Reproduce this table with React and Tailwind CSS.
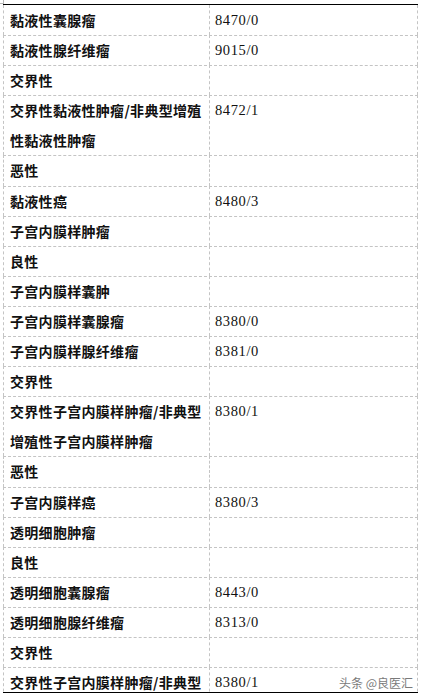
import React from "react";

const rows = [
  [["黏液性囊腺瘤"], "8470/0"],
  [["黏液性腺纤维瘤"], "9015/0"],
  [["交界性"], ""],
  [["交界性黏液性肿瘤/非典型增殖", "性黏液性肿瘤"], "8472/1"],
  [["恶性"], ""],
  [["黏液性癌"], "8480/3"],
  [["子宫内膜样肿瘤"], ""],
  [["良性"], ""],
  [["子宫内膜样囊肿"], ""],
  [["子宫内膜样囊腺瘤"], "8380/0"],
  [["子宫内膜样腺纤维瘤"], "8381/0"],
  [["交界性"], ""],
  [["交界性子宫内膜样肿瘤/非典型", "增殖性子宫内膜样肿瘤"], "8380/1"],
  [["恶性"], ""],
  [["子宫内膜样癌"], "8380/3"],
  [["透明细胞肿瘤"], ""],
  [["良性"], ""],
  [["透明细胞囊腺瘤"], "8443/0"],
  [["透明细胞腺纤维瘤"], "8313/0"],
  [["交界性"], ""],
  [["交界性子宫内膜样肿瘤/非典型"], "8380/1"],
];

export default function App() {
  return (
    <div className="relative h-[699px] w-[422px] overflow-hidden bg-white text-[#111111]">
      <div className="absolute left-[3px] top-0 h-[4px] w-px bg-[#b8b8b8]" />
      <div className="absolute left-0 top-[3px] h-px w-[3px] bg-[#b8b8b8]" />
      <div className="ml-[3px] mt-[4px] h-[689px] w-[415px] overflow-hidden border-t border-b border-black">
        {rows.map(([left, right], i) => (
          <div
            key={i}
            className="-mb-px flex border-b border-dashed border-[#c4c4c4] leading-[30.1px]"
          >
            <div
              className="w-[207px] shrink-0 whitespace-nowrap border-l border-r border-dashed border-[#c4c4c4] pl-[6px] text-[14px] font-semibold tracking-[0.3px]"
              style={{ fontFamily: '"Noto Sans CJK SC", sans-serif' }}
            >
              {left.map((t, j) => (
                <div key={j}>{t}</div>
              ))}
            </div>
            <div
              className="flex-1 border-r border-dashed border-[#c4c4c4] pl-[5px] text-[14.5px] tracking-[0.6px]"
              style={{ fontFamily: '"Liberation Serif", serif' }}
            >
              {right}
            </div>
          </div>
        ))}
      </div>
      <div
        className="absolute bottom-[9px] right-[9px] text-[12px] leading-[14px] text-[#7a7a7a]"
        style={{ fontFamily: '"Noto Sans CJK SC", sans-serif' }}
      >
        头条 @良医汇
      </div>
    </div>
  );
}
